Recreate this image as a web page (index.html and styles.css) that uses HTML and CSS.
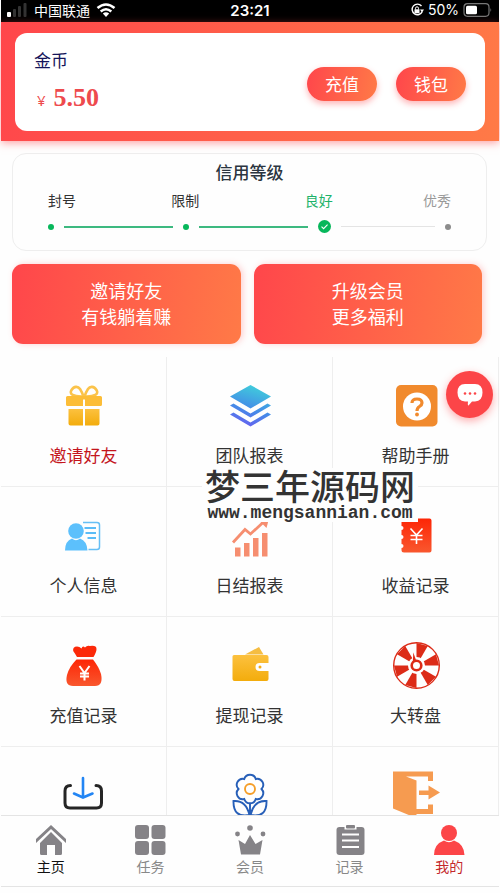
FILE: index.html
```html
<!DOCTYPE html>
<html lang="zh-CN">
<head>
<meta charset="utf-8">
<meta name="viewport" content="width=device-width, initial-scale=1">
<title>我的</title>
<link rel="stylesheet" href="styles.css">
</head>
<body>
<div class="status">
  <div class="status-side">
    <svg class="signal" viewBox="0 0 21 14" width="21" height="14"><rect x="0" y="9" width="4" height="5" rx="1" fill="#fff"/><rect x="6" y="6" width="3" height="8" rx="1" fill="#333"/><rect x="11" y="3" width="3" height="11" rx="1" fill="#333"/><rect x="16.500" y="0" width="3" height="14" rx="1" fill="#333"/></svg>
    <span>中国联通</span>
    <svg viewBox="0 0 20 14" width="20" height="14"><g fill="none" stroke="#fff" stroke-width="2.600"><path d="M1.500 5Q10-2 18.500 5"/><path d="M4.700 8.500Q10 4 15.300 8.500"/></g><path d="M6.800 10.500Q10 8 13.200 10.500L10 14Z" fill="#fff"/></svg>
  </div>
  <strong class="clock">23:21</strong>
  <div class="status-side status-end">
    <svg viewBox="0 0 14 14" width="14" height="14"><path d="M11.500 3A5.300 5.300 0 1 0 12.300 8.500" fill="none" stroke="#fff" stroke-width="1.400"/><path d="M10 6.500h4L12 9.500Z" fill="#fff"/><rect x="4.500" y="6.300" width="5" height="4" fill="#fff"/><path d="M5.500 6.500V5.300a1.500 1.500 0 0 1 3 0V6.500" fill="none" stroke="#fff"/></svg>
    <span>50%</span>
    <svg viewBox="0 0 30 14" width="30" height="14"><rect x="1" y=".7" width="25" height="12.600" rx="3.500" fill="none" stroke="#777" stroke-width="1.200"/><rect x="3" y="2.700" width="11" height="8.600" rx="1.500" fill="#fff"/><path d="M27.500 5v4q1.500-2 0-4Z" fill="#888"/></svg>
  </div>
</div>

<header class="hero">
  <section class="balance">
    <div>
      <div class="coin">金币</div>
      <div class="amount"><span class="yen">¥</span><strong>5.50</strong></div>
    </div>
    <div class="actions">
      <button class="pill" type="button">充值</button>
      <button class="pill" type="button">钱包</button>
    </div>
  </section>
</header>

<main class="content">
  <section class="credit">
    <h2>信用等级</h2>
    <div class="levels"><span>封号</span><span class="level-b">限制</span><span class="level-c">良好</span><span class="level-d">优秀</span></div>
    <div class="track">
      <i class="dot"></i><i class="line"></i><i class="dot"></i><i class="line"></i>
      <svg viewBox="0 0 14 14" width="13" height="13"><circle cx="7" cy="7" r="7" fill="#07b75b"/><path d="M3.800 7.200L6 9.300 10.300 5" fill="none" stroke="#fff" stroke-width="1.200"/></svg>
      <i class="line line-off"></i><i class="dot dot-off"></i>
    </div>
  </section>

  <nav class="promos">
    <a class="promo" href="#invite">邀请好友<br>有钱躺着赚</a>
    <a class="promo" href="#vip">升级会员<br>更多福利</a>
  </nav>

  <nav class="menu">
    <a class="cell cell-hot" href="#invite">
      <svg viewBox="0 0 48 48"><defs><linearGradient id="gold" x2="0" y2="1"><stop offset="0" stop-color="#fcc13f"/><stop offset="1" stop-color="#f3ac0c"/></linearGradient></defs><g fill="none" stroke="#fbc34a" stroke-width="2.600"><path d="M23.500 15.500C13 16 9 13 11.500 9 14 5 18 5 20 8Q22 11 23.500 15.500Z"/><path d="M24.500 15.500C35 16 39 13 36.500 9 34 5 30 5 28 8Q26 11 24.500 15.500Z"/></g><path d="M7.500 15H23v10H7.500Q6 25 6 23.500v-7Q6 15 7.500 15ZM25 15H40.500Q42 15 42 16.500v7Q42 25 40.500 25H25Z" fill="#fcbd37"/><path d="M22 15h4v3.500h-4Z" fill="#fcbd37"/><path d="M8.500 28H23V44.500H10.500q-2 0-2-2ZM25 28H39.500V42.500q0 2-2 2H25Z" fill="url(#gold)"/></svg>
      <span>邀请好友</span></a>
    <a class="cell" href="#team">
      <svg viewBox="0 0 48 48"><defs><linearGradient id="sky" gradientUnits="userSpaceOnUse" x1="30" y1="4" x2="18" y2="46"><stop offset="0" stop-color="#40cfdb"/><stop offset=".55" stop-color="#438ee7"/><stop offset="1" stop-color="#675ff0"/></linearGradient></defs><path d="M24.500 4L45 15.500 24.500 27.500 4 15.500ZM4 24.500L7.500 22.500 24.500 32.500 41.500 22.500 45 24.500 24.500 36.500ZM4 33.500L7.500 31.500 24.500 41.500 41.500 31.500 45 33.500 24.500 45.500Z" fill="url(#sky)"/></svg>
      <span>团队报表</span></a>
    <a class="cell" href="#help">
      <svg viewBox="0 0 48 48"><rect x="4" y="4" width="41.500" height="41.500" rx="5" fill="#f18a2d"/><circle cx="25" cy="25.500" r="14" fill="#fff"/><path d="M20 22Q20 18 25 18T30 22Q30 24 27.500 25.500 25 27 25 30" fill="none" stroke="#f18a2d" stroke-width="3.200"/><circle cx="25" cy="33.500" r="1.900" fill="#f18a2d"/></svg>
      <span>帮助手册</span></a>
    <a class="cell" href="#profile">
      <svg viewBox="0 0 48 48"><path d="M23 11.500H37q2.500 0 2.500 2.500V36q0 2.500-2.500 2.500H28.500" fill="none" stroke="#66bff5" stroke-width="1.500"/><path d="M24.500 17H36M25.500 22H36M27.500 27H36" stroke="#5bbcf7" stroke-width="2"/><circle cx="16" cy="20" r="7.800" fill="#5cc0fc"/><path d="M5 39.500Q5 30 12 27.500Q16 31 20 27.500Q27 30 27.500 39.500Z" fill="#5cc0fc"/></svg>
      <span>个人信息</span></a>
    <a class="cell" href="#daily">
      <svg viewBox="0 0 48 48" fill="#f68e70"><path d="M9 36.500h5.500v9H9ZM18 32h5.500v13.500H18ZM27 27h5.500v18.500H27ZM36 22h5.500v23.500H36Z"/><path d="M7 31.500L19 18.500 24.500 23 37 11.500" fill="none" stroke="#f68e70" stroke-width="2.800"/><path d="M33 9.500L43 7.500 40.500 17Z"/></svg>
      <span>日结报表</span></a>
    <a class="cell" href="#income">
      <svg viewBox="0 0 48 48"><defs><linearGradient id="fire" x2="0" y2="1"><stop offset="0" stop-color="#fd2606"/><stop offset="1" stop-color="#f9572e"/></linearGradient></defs><path d="M12 7.500H37.500Q39.500 7.500 39.500 9.500V39.500Q39.500 41.500 37.500 41.500H12Q9.500 41.500 9.500 39V37a1.700 1.700 0 0 0 0-4V28a1.700 1.700 0 0 0 0-4V19a1.700 1.700 0 0 0 0-4V10Q9.500 7.500 12 7.500Z" fill="url(#fire)"/><path d="M18.500 17.500L24.500 24 30.500 17.500M24.500 24V33M18.500 24.500H30.500M18.500 28.500H30.500" fill="none" stroke="#fff" stroke-width="1.600"/></svg>
      <span>收益记录</span></a>
    <a class="cell" href="#deposit">
      <svg viewBox="0 0 48 48"><path d="M17 16Q15 12.500 13.200 10Q12.500 5.500 17 5.500 19.500 5.500 21.500 7.500 22.500 4 25 6.500 27 4 30 5Q36.500 4 36.500 8 36.500 11 33.500 16Z" fill="#fc2909"/><path d="M16.500 18.500H33Q39 26 41 33 43.500 45 35 45H13Q4.500 45 7 34 9 26 16.500 18.500Z" fill="url(#fire)"/><path d="M19.500 25L24.500 32 29.500 25M24.500 31V39.500M20 32.500H29M20 35.500H29" fill="none" stroke="#fff" stroke-width="2"/></svg>
      <span>充值记录</span></a>
    <a class="cell" href="#withdraw">
      <svg viewBox="0 0 48 48"><path d="M19 13.500L33 6 37.500 13.500Z" fill="#f5bd42"/><path d="M8 14H40.500Q42.500 14 42.500 16V22H33.500a4 4 0 0 0 0 8H42.500V38Q42.500 40 40.500 40H8.500Q6.500 40 6.500 38V15.500Q6.500 14 8 14Z" fill="url(#gold)"/><circle cx="34" cy="26" r="1.500" fill="#f5ad16"/></svg>
      <span>提现记录</span></a>
    <a class="cell" href="#wheel">
      <svg viewBox="0 0 48 48"><circle cx="24.500" cy="24.500" r="22.800" fill="none" stroke="#dc2b17" stroke-width="1.400"/><g fill="#dc2b17"><path id="blade" d="M24.500 24.500H47L44 13.250Z"/><use href="#blade" transform="rotate(60 24.500 24.500)"/><use href="#blade" transform="rotate(120 24.500 24.500)"/><use href="#blade" transform="rotate(180 24.500 24.500)"/><use href="#blade" transform="rotate(240 24.500 24.500)"/><use href="#blade" transform="rotate(300 24.500 24.500)"/></g><circle cx="24.500" cy="24.500" r="8.500" fill="#fff"/><circle cx="24.500" cy="24.500" r="4.800" fill="none" stroke="#dc2b17" stroke-width="2.600"/><path d="M21.300 11.500L24.500 20.500H20.800Z" fill="#dc2b17"/></svg>
      <span>大转盘</span></a>
    <a class="cell" href="#download" aria-label="下载">
      <svg viewBox="0 0 48 48" fill="none" stroke-linecap="round" stroke-width="3"><path d="M10.500 14.500Q5 14.500 5 20V32Q5 37 10 37H36.500Q41.500 37 41.500 32V20Q41.500 14.500 36 14.500" stroke="#252525"/><path d="M23 7V25.500M14 22.500L23 26.500 32.500 22.500" stroke="#2285f4" stroke-width="2.600"/></svg></a>
    <a class="cell" href="#flower" aria-label="花">
      <svg viewBox="0 0 48 48" fill="none" stroke="#275fb8" stroke-width="1.900"><path d="M35.500 18A6 6 0 0 0 29.750 8 6 6 0 0 0 18.250 8 6 6 0 0 0 12.500 18 6 6 0 0 0 18.250 28 6 6 0 0 0 29.750 28 6 6 0 0 0 35.500 18Z"/><circle cx="24" cy="18" r="5" stroke="#f59e28"/><path d="M7.500 30Q20 29 23.500 44Q7 47 7.500 30ZM40.500 30Q28 29 24.500 44Q41 47 40.500 30ZM24 33V48"/></svg></a>
    <a class="cell" href="#logout" aria-label="退出">
      <svg viewBox="0 0 48 48" fill="#f69b50"><path d="M1 .5H41V10H36V5.500H14L24.500 9.500V38H36V33.500H41V43H24.500V46L18 44.500 1 37.500Z"/><path d="M27 19.500H36.500V14.500L48 21.500 36.500 28.500V24H27Z"/></svg></a>
  </nav>
</main>

<nav class="tabs">
  <a class="tab tab-home" href="#home"><svg viewBox="0 0 32 30"><path d="M1 18V14L16 0 31 14V18L16 4Z"/><path d="M5 18L16 7 27 18V28.500Q27 30 25.500 30H20V20H12V30H6.500Q5 30 5 28.500Z"/></svg><span>主页</span></a>
  <a class="tab" href="#tasks"><svg viewBox="0 0 32 30"><rect x="1" y="0" width="14" height="14" rx="3"/><rect x="17.500" y="0" width="14" height="14" rx="3"/><rect x="1" y="16" width="14" height="14" rx="3"/><rect x="17.500" y="16" width="14" height="14" rx="3"/></svg><span>任务</span></a>
  <a class="tab" href="#members"><svg viewBox="0 0 32 30"><circle cx="3.500" cy="9" r="2.400"/><circle cx="16" cy="3" r="2.800"/><circle cx="29" cy="9" r="2.400"/><path d="M4.500 15L11 19 16 10 21.500 19 28.500 15 26 29.500H7Z"/></svg><span>会员</span></a>
  <a class="tab" href="#records"><svg viewBox="0 0 32 30"><rect x="2.500" y="2" width="28" height="28" rx="3"/><rect x="10.500" y="-1" width="12" height="5.500" fill="#fefefe"/><rect x="12" y="0" width="9" height="3.500" rx="1"/><path d="M8 9.500H25M8 15.500H25M8 22H25" stroke="#fefefe" stroke-width="2"/></svg><span>记录</span></a>
  <a class="tab tab-mine" href="#mine"><svg viewBox="0 0 32 30"><circle cx="16" cy="8" r="8"/><path d="M1 30Q1 19 11 15.500Q16 19 21 15.500Q31 19 31.500 30Z"/></svg><span>我的</span></a>
</nav>

<button class="chat" type="button" aria-label="客服"><svg viewBox="0 0 26 24" width="26" height="24"><path d="M8 1H18Q25.500 1 25.500 9.500T18 18.500H15L11.500 22.500Q10.500 23 11 18.500H8Q.5 18 .5 9.500T8 1Z" fill="#fff"/><g fill="#fc4548"><circle cx="8" cy="10.500" r="1.300"/><circle cx="13" cy="10.500" r="1.300"/><circle cx="18" cy="10.500" r="1.300"/></g></svg></button>
<div class="watermark"><b>梦三年源码网</b><small>www.mengsannian.com</small></div>
</body>
</html>
```
FILE: styles.css
```css
:root {
  --warm: linear-gradient(100deg, #ff464b, #ff7a47);
  --rule: #eeeeee;
}

* { box-sizing: border-box; }

body {
  position: relative;
  display: flex;
  flex-direction: column;
  height: 100vh;
  margin: 0;
  padding: 0 1px;
  background: #fefefe;
  color: #333;
  font-family: "Noto Sans CJK SC", sans-serif;
  overflow: hidden;
}

a { color: inherit; text-decoration: none; }
button { border: 0; padding: 0; font-family: inherit; }
svg { display: block; flex: none; }

.status {
  flex: none;
  display: grid;
  grid-template-columns: 1fr auto 1fr;
  align-items: center;
  height: 22px;
  padding: 0 6px;
  background: #000;
  color: #fff;
  font-size: 14px;
  line-height: 20px;
}

.status-side { display: flex; align-items: center; gap: 6px; padding-bottom: 2px; }
.status-end { justify-content: flex-end; gap: 4px; font-family: Inter, sans-serif; font-size: 14px; }
.clock { font: 600 15px/20px Inter, sans-serif; }

.hero {
  position: relative;
  z-index: 1;
  flex: none;
  padding: 11px 14px 10px;
  background: var(--warm);
  box-shadow: 0 2px 8px rgba(255, 70, 75, .5);
}

.balance {
  display: flex;
  justify-content: space-between;
  align-items: center;
  height: 98px;
  padding: 0 19px;
  border-radius: 12px;
  background: #fff;
}

.coin { color: #15155a; font-size: 17px; line-height: 24px; }
.amount { display: flex; align-items: center; gap: 8px; margin-top: 8px; padding-left: 3px; color: #ee4a4d; line-height: 32px; }
.yen { padding-top: 4px; font-family: "Noto Sans", sans-serif; font-size: 15px; }
.amount strong { font-family: "Liberation Serif", serif; font-size: 26px; }

.actions { display: flex; gap: 19px; padding-top: 4px; }

.pill {
  width: 70px;
  height: 34px;
  border-radius: 17px;
  background: var(--warm);
  box-shadow: 0 3px 6px rgba(255, 70, 75, .4);
  color: #fff;
  font-size: 17px;
  line-height: 32px;
}

.content { flex: 1; min-height: 0; overflow: hidden; }

.credit {
  margin: 12px 12px 13px 11px;
  padding: 6px 35px 17px;
  border: 1px solid var(--rule);
  border-radius: 14px;
}

.credit h2 { margin: 0; color: #2b3540; font-size: 17px; font-weight: 500; line-height: 24px; text-align: center; }

.levels {
  display: grid;
  grid-template-columns: auto 19fr auto 21fr auto 18fr auto;
  margin-top: 6px;
  font-size: 14px;
  line-height: 20px;
}

.level-b { grid-column: 3; }
.level-c { grid-column: 5; color: #1db36b; }
.level-d { grid-column: 7; color: #999; }

.track { display: flex; align-items: center; gap: 10px; margin-top: 10px; }
.dot { width: 6px; height: 6px; border-radius: 50%; background: #07b75b; }
.dot-off { background: #8c8c8c; }
.line { flex: 7; height: 2px; background: #3db980; }
.line-off { flex: 6; height: 1px; background: #e4e4e4; }

.promos { display: grid; grid-template-columns: 1fr 1fr; gap: 13px; margin: 0 17px 0 11px; }

.promo {
  padding: 13px 0 15px;
  border-radius: 11px;
  background: var(--warm);
  box-shadow: 2px 0 6px rgba(255, 70, 75, .25);
  color: #fff;
  font-size: 18px;
  line-height: 26px;
  text-align: center;
}

.menu { display: grid; grid-template-columns: repeat(3, 1fr); margin-top: 13px; }

.cell {
  display: flex;
  flex-direction: column;
  align-items: center;
  gap: 14px;
  height: 130px;
  padding-top: 24px;
  border-right: 1px solid var(--rule);
  border-bottom: 1px solid var(--rule);
  font-size: 17px;
  line-height: 24px;
}

.cell svg { width: 48px; height: 48px; }
.cell-hot { color: #c4161d; }

.tabs {
  flex: none;
  display: grid;
  grid-template-columns: repeat(5, 1fr);
  margin-bottom: 6px;
  padding: 9px 0 10px;
  border: solid #e4e4e4;
  border-width: 1px 0;
  background: #fefefe;
}

.tab {
  display: flex;
  flex-direction: column;
  align-items: center;
  gap: 1px;
  color: #888;
  font-size: 14px;
  line-height: 20px;
}

.tab svg { width: 32px; height: 30px; fill: #858387; }
.tab-home { color: #111; }
.tab-mine { color: #c4282b; }
.tab-mine svg { fill: #fc4548; }

.chat {
  position: absolute;
  z-index: 2;
  top: 371px;
  right: 7px;
  display: grid;
  place-items: center;
  width: 47px;
  height: 47px;
  border-radius: 50%;
  background: #fc4548;
  box-shadow: 0 3px 8px rgba(255, 70, 75, .45);
}

.watermark {
  position: absolute;
  top: 468px;
  left: 202px;
  padding: 0 3px;
  background: #fefefe;
  color: #333;
  text-align: center;
  pointer-events: none;
}

.watermark b { display: block; font-size: 35px; font-weight: 500; line-height: 34px; }
.watermark small { display: block; font: bold 18px/18px "Liberation Mono", monospace; padding-top: 2px; }
```
